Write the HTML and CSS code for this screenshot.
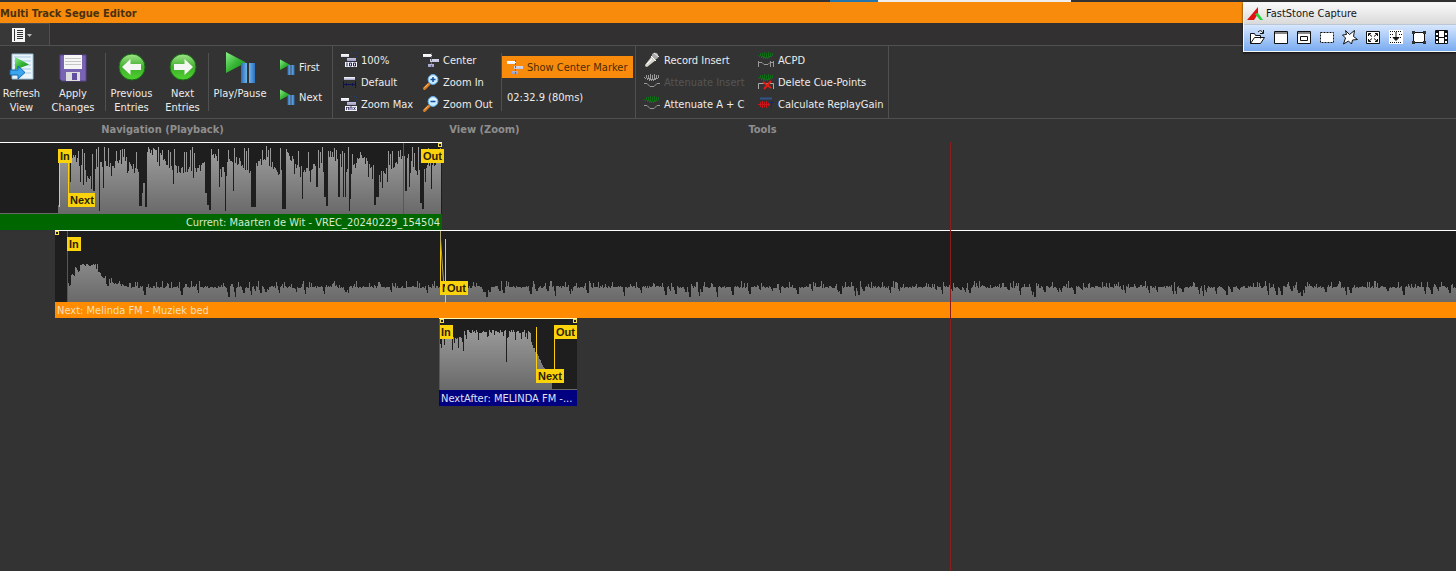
FILE: index.html
```html
<!DOCTYPE html>
<html lang="en">
<head>
<meta charset="utf-8">
<title>Multi Track Segue Editor</title>
<link rel="stylesheet" href="styles.css">
</head>
<body>
<svg class="defs" aria-hidden="true">
  <defs>
    <linearGradient id="wave" x1="0" y1="0" x2="0" y2="71" gradientUnits="userSpaceOnUse"><stop offset="0" stop-color="#a2a2a2"/><stop offset="1" stop-color="#696969"/></linearGradient>
    <linearGradient id="green" x1="0" y1="0" x2="1" y2="1"><stop offset="0" stop-color="#8df08a"/><stop offset=".5" stop-color="#37b535"/><stop offset="1" stop-color="#168a1c"/></linearGradient>
    <linearGradient id="ball" x1="0" y1="0" x2="0" y2="1"><stop offset="0" stop-color="#a3e58b"/><stop offset=".5" stop-color="#3fae2c"/><stop offset="1" stop-color="#4fd22f"/></linearGradient>
    <linearGradient id="blue" x1="0" y1="0" x2="1" y2="0"><stop offset="0" stop-color="#2c6cb8"/><stop offset=".5" stop-color="#78bdf2"/><stop offset="1" stop-color="#2d70bd"/></linearGradient>
    <linearGradient id="bar" x1="0" y1="0" x2="0" y2="1"><stop offset="0" stop-color="#fff"/><stop offset="1" stop-color="#9c9cc8"/></linearGradient>
    <symbol id="playpause" viewBox="0 0 32 32">
      <path d="M2 1L22 11.500L2 22Z" fill="url(#green)"/>
      <path d="M17 12h6v20h-6zM25 12h6v20h-6z" fill="url(#blue)"/>
    </symbol>
    <symbol id="center" viewBox="0 0 16 16">
      <path d="M0 2h9v3H0zM7 7h9v3H7zM5 12h6v3H5z" fill="url(#bar)"/>
      <path d="M8.500 1v14" stroke="#b04a5c" stroke-dasharray="2 1"/>
    </symbol>
    <symbol id="scale" viewBox="0 0 16 16">
      <path d="M0 2h8v3H0zM6 6h9v3H6z" fill="url(#bar)"/>
      <path d="M10 .500h6M.500 11v3M15.500 1v4M2 12.500h2" stroke="#233c78" stroke-dasharray="1 2"/>
      <path d="M4 10h12v5H4z" fill="#f3f3ff"/>
    </symbol>
    <symbol id="lens" viewBox="0 0 16 16">
      <path d="M1.500 14.500L6 10" stroke="#d77a25" stroke-width="3" stroke-linecap="round"/>
      <path d="M1.500 13.700L5 10.200" stroke="#ffc477"/>
      <circle cx="10" cy="5.500" r="4.900" fill="#c9ebff" stroke="#60aff0"/>
      <path d="M7 4q3-3 6 0" stroke="#fff" fill="none"/>
    </symbol>
    <symbol id="noise" viewBox="0 0 16 7"><path d="M.500 3v1M2.500 1v3M4.500 1v4M6.500 0v6M8.500 1v5M10.500 0v6M12.500 1v4M14.500 1v3M1.500 4v1M3.500 4v2M5.500 4v3M7.500 5v2M9.500 5v2M11.500 4v2M13.500 4v1" fill="none" stroke="currentColor"/></symbol>
  </defs>
</svg>

<header class="titlebar"><h1>Multi Track Segue Editor</h1></header>
<div class="tabs">
  <button class="menu" aria-label="Application menu">
    <svg width="20" height="14" viewBox="0 0 20 14"><path d="M0 0h13v14H0z" fill="#f5f5f5"/><path d="M2.500 1v12M5 2.500h6M5 4.500h6M5 6.500h6M5 8.500h6M5 10.500h6" stroke="#333" fill="none"/><path d="M15 6h5l-2.500 3z" fill="#bbb"/></svg>
  </button>
</div>

<nav class="ribbon" aria-label="Ribbon">
  <section class="group navigation">
    <div class="body">
      <button class="big refresh">
        <svg width="32" height="32" viewBox="0 0 32 32"><path d="M6 3h21v25H6z" fill="#eaf4fb" stroke="#9dc2d4"/><path d="M8 6h17M8 10h17M8 14h17M8 18h17M8 22h17" stroke="#a9cbe2"/><path d="M9 6l14 7.500L9 19z" fill="url(#green)"/><path d="M4 19h8v-4l7 6.500-7 6.500v-4H4z" fill="#39a6ee" stroke="#1767b0"/></svg>
        <span>Refresh<br>View</span>
      </button>
      <button class="big apply">
        <svg width="32" height="32" viewBox="0 0 32 32"><path d="M3 4h26v26H5l-2-2z" fill="#7964b4" stroke="#5b458f"/><path d="M7 4h18v14H7z" fill="#f6f6f6"/><path d="M8 7.500h16M8 10.500h16M8 13.500h16" stroke="#c5c5c5"/><path d="M9 21h14v9H9z" fill="#ddd"/><path d="M15 22h5v7h-5z" fill="#644da0"/></svg>
        <span>Apply<br>Changes</span>
      </button>
      <i class="sep"></i>
      <button class="big">
        <svg width="32" height="32" viewBox="0 0 32 32"><circle cx="16" cy="16" r="13" fill="url(#ball)" stroke="#176d16"/><path d="M6 16l8.500-8v5H25v6H14.500v5z" fill="#f4f6f3"/></svg>
        <span>Previous<br>Entries</span>
      </button>
      <button class="big">
        <svg width="32" height="32" viewBox="0 0 32 32"><circle cx="16" cy="16" r="13" fill="url(#ball)" stroke="#176d16"/><path d="M26 16l-8.500-8v5H7v6h10.500v5z" fill="#f4f6f3"/></svg>
        <span>Next<br>Entries</span>
      </button>
      <i class="sep"></i>
      <button class="big play"><svg width="32" height="32"><use href="#playpause"/></svg><span>Play/Pause</span></button>
      <div class="stack loose">
        <button class="small"><svg width="16" height="16"><use href="#playpause"/></svg>First</button>
        <button class="small"><svg width="16" height="16"><use href="#playpause"/></svg>Next</button>
      </div>
    </div>
    <h2>Navigation (Playback)</h2>
  </section>

  <section class="group view">
    <div class="body">
      <div class="stack first">
        <button class="small"><svg width="16" height="16"><use href="#scale"/><path d="M6 10.500v4M8.500 11h2v3h-2zM12.500 11h2v3h-2z" stroke="#225" fill="none"/></svg>100%</button>
        <button class="small"><svg width="16" height="16" viewBox="0 0 16 16"><path d="M3 3h11v3H3z" fill="url(#bar)"/><path d="M2.500 7v7M14.500 7v7M3 10.500h11M5.500 9v3M11.500 9v3" stroke="#0c1450"/></svg>Default</button>
        <button class="small"><svg width="16" height="16"><use href="#scale"/><path d="M5.500 14v-3l1 1 1-1v3M9 14v-3h2v3M12.500 11l2 3M14.500 11l-2 3" stroke="#225" fill="none" stroke-width=".8"/></svg>Zoom Max</button>
      </div>
      <div class="stack second">
        <button class="small"><svg width="16" height="16"><use href="#center"/></svg>Center</button>
        <button class="small"><svg width="16" height="16"><use href="#lens"/><path d="M7.500 5.500h5M10 3v5" stroke="#124ea0" stroke-width="1.500"/></svg>Zoom In</button>
        <button class="small"><svg width="16" height="16"><use href="#lens"/><path d="M7.500 5.500h5" stroke="#124ea0" stroke-width="1.500"/></svg>Zoom Out</button>
      </div>
      <i class="sep"></i>
      <div class="stack loose marker">
        <button class="small active" aria-pressed="true"><svg width="16" height="16"><use href="#center"/></svg>Show Center Marker</button>
        <output class="time">02:32.9 (80ms)</output>
      </div>
    </div>
    <h2>View (Zoom)</h2>
  </section>

  <section class="group tools">
    <div class="body">
      <div class="stack insert">
        <button class="small"><svg width="16" height="16" viewBox="0 0 16 16"><path d="M1 13l7-9 4 4-9 7q-2 0-2-2z" fill="#d8d5cd"/><circle cx="11" cy="4" r="3.200" fill="#aaa"/><path d="M7 4l5 5M3 12l5-5" stroke="#fff"/><path d="M10 1l5 4" stroke="#eee"/></svg>Record Insert</button>
        <button class="small" disabled><svg width="16" height="16" color="#999"><use href="#noise" width="16" height="7"/><path d="M0 9.500h3l3 3h4l3-3h3" fill="none" stroke="#999"/></svg>Attenuate Insert</button>
        <button class="small"><svg width="16" height="16" color="#126b18"><use href="#noise" width="16" height="7"/><path d="M0 9.500h3l3 3h4l3-3h3" fill="none" stroke="#999"/></svg>Attenuate A + C</button>
      </div>
      <div class="stack">
        <button class="small"><svg width="16" height="16" color="#126b18"><use href="#noise" width="16" height="7"/><path d="M.500 15V9M1 10.500h3l2 2h4l2-2h3M12.500 9v6M15.500 9v6" fill="none" stroke="#999"/></svg>ACPD</button>
        <button class="small"><svg width="16" height="16" color="#126b18"><use href="#noise" width="16" height="7"/><path d="M.500 15v-5.500h15V15" fill="none" stroke="#aaa"/><path d="M5 8l8 6M13 7l-7 8" stroke="#e31c13" stroke-width="2"/></svg>Delete Cue-Points</button>
        <button class="small"><svg width="16" height="16" viewBox="0 0 16 16"><path d="M2 2.500h12" stroke="#31558b" stroke-width="2"/><path d="M0 8.500h12M2.500 6v5M4.500 5v7M6.500 6v5M8.500 5v7M10.500 7v3" fill="none" stroke="#c5171b"/><path d="M13.500 5v8M12 6.500h4" stroke="#17208c"/></svg>Calculate ReplayGain</button>
      </div>
    </div>
    <h2>Tools</h2>
  </section>
</nav>

<main class="timeline">
  <article class="clip current">
    <svg class="wave" data-wave="current"></svg>
    <i class="cue" style="left:59px;top:18px;height:46px"></i>
    <i class="cue" style="left:68px;top:18px;height:40px"></i>
    <i class="playhead" style="left:403px"></i>
    <b class="flag" style="left:58px">In</b>
    <b class="flag low" style="left:68px">Next</b>
    <i class="handle" style="left:438px"></i>
    <b class="flag" style="left:421px">Out</b>
    <footer>Current: Maarten de Wit - VREC_20240229_154504</footer>
  </article>
  <article class="clip next">
    <svg class="wave" data-wave="next"></svg>
    <i class="cue" style="left:385px;top:8px;height:50px"></i>
    <i class="cue" style="left:390px;top:8px;height:64px"></i>
    <svg class="fade" width="6" height="64"><path d="M.500 0v8l4 56" stroke="#b0a870" fill="none"/></svg>
    <i class="playhead" style="left:12px"></i>
    <i class="handle" style="left:0"></i>
    <b class="flag" style="left:12px">In</b>
    <b class="flag low covered" style="left:385px">N</b>
    <b class="flag low" style="left:390px">Out</b>
    <footer>Next: Melinda FM - Muziek bed</footer>
  </article>
  <article class="clip after">
    <svg class="wave" data-wave="after"></svg>
    <i class="cue" style="left:97px;top:8px;height:50px"></i>
    <i class="cue" style="left:115px;top:18px;height:40px"></i>
    <i class="handle" style="left:1px"></i>
    <i class="handle" style="left:134px"></i>
    <b class="flag" style="left:0">In</b>
    <b class="flag" style="left:115px">Out</b>
    <b class="flag low" style="left:97px">Next</b>
    <i class="playhead" style="left:0"></i>
    <footer>NextAfter: MELINDA FM -...</footer>
  </article>
  <i class="centerline"></i>
</main>

<aside class="capture" aria-label="FastStone Capture">
  <h2><svg width="16" height="14" viewBox="0 0 16 14"><path d="M0 13L11 0v7L7 13z" fill="#e01212"/><path d="M8 7l3-1 5 7h-3z" fill="#22d43a"/></svg>FastStone Capture</h2>
  <div class="captools">
    <button aria-label="Open"><svg width="17" height="16"><path d="M1.500 14.500v-10h4l1 2h5v3M1.500 14.500l4-6h10l-4 6zM9 3q3-3 5 1M14.500 1v3.500H11"/></svg></button>
    <button aria-label="Active window"><svg width="17" height="16"><path d="M2.500 2.500h13v12h-13zM2 4h14"/></svg></button>
    <button aria-label="Window object"><svg width="17" height="16"><path d="M2.500 2.500h13v12h-13zM2 4h14M5.500 7.500h7v4h-7z"/></svg></button>
    <button aria-label="Rectangle"><svg width="17" height="16"><path d="M2.500 3.500h13v10h-13z" stroke-dasharray="2 1"/></svg></button>
    <button aria-label="Freehand"><svg width="17" height="16"><path d="M4.500 1.500l4 4 5-4-1 6 4 3-5 .500-1 4-3-3-5 3 2-6-3-3 4-.500z"/></svg></button>
    <button aria-label="Full screen"><svg width="17" height="16"><path d="M2.500 2.500h13v12h-13zM5 5l3 2.500M13 5l-3 2.500M5 12l3-2.500M13 12l-3-2.500M4.500 7V4.500H7M11 4.500h2.500V7M4.500 10v2.500H7M11 12.500h2.500V10"/></svg></button>
    <button aria-label="Scrolling window"><svg width="17" height="16"><path d="M2 1h14v14H2z" stroke="none"/><path d="M3 2.500h12M3 5.500h3M12 5.500h3M3 8.500h2M13 8.500h2M3 13.500h12" stroke-dasharray="1 1"/><path d="M9 3v7M6 8.500l3 3 3-3z" fill="#111"/></svg></button>
    <button aria-label="Fixed region"><svg width="17" height="16"><path d="M3.500 3.500h11v10h-11z"/><path d="M2 2h3v3H2zM13 2h3v3h-3zM2 12h3v3H2zM13 12h3v3h-3z" fill="#333" stroke="none"/></svg></button>
    <button aria-label="Video"><svg width="17" height="16"><path d="M2.500 1.500h12v13h-12zM5.500 1v14M11.500 1v14M5.500 8.500h6"/><path d="M4 2v12M13 2v12" stroke-dasharray="2 2" stroke-width="2"/></svg></button>
  </div>
</aside>
<script src="waves.js"></script>
</body>
</html>
```

FILE: styles.css
```css
*, *::after { box-sizing: border-box; }

body {
  margin: 0;
  min-height: 100vh;
  display: flex;
  flex-direction: column;
  position: relative;
  overflow-x: hidden;
  background: #333;
  color: #ececec;
  font: 11px/13px "DejaVu Sans Condensed", "DejaVu Sans", sans-serif;
}

h1, h2 { margin: 0; font-size: 11px; }
svg { flex: none; }
.defs { position: absolute; width: 0; height: 0; }

button {
  padding: 0;
  border: 0;
  background: none;
  color: inherit;
  font: inherit;
  white-space: nowrap;
}

.titlebar {
  height: 23px;
  border-top: 2px solid #333;
  border-image: linear-gradient(90deg, #333 57%, #2477ae 57%, #2477ae 60.300%, #eee 60.300%, #eee 73.500%, #333 73.500%) 2;
  background: #f98b0c;
}
.titlebar h1 { color: #49300f; line-height: 23px; }

.tabs { height: 22px; background: #323031; }
.menu {
  display: flex;
  align-items: center;
  width: 50px;
  height: 22px;
  padding-left: 12px;
  border-top: 1px solid #4c4c4c;
  border-right: 1px solid #505050;
  background: #383838;
}

.ribbon { display: flex; height: 97px; }
.ribbon::after { content: ""; flex: 1; height: 74px; border: solid #505050; border-width: 1px 0; }
.group .body {
  display: flex;
  height: 74px;
  border: solid #505050;
  border-width: 1px 1px 1px 0;
}
.group h2 { padding-top: 3px; line-height: 15px; color: #8e8e8e; text-align: center; }
.navigation { width: 333px; }
.navigation h2 { padding-right: 8px; }
.view { width: 303px; }
.tools { width: 253px; }

.sep { width: 1px; height: 58px; margin-top: 7px; background: #505050; }

.big {
  display: flex;
  flex-direction: column;
  align-items: center;
  gap: 4px;
  width: 51px;
  padding-top: 5px;
  line-height: 14px;
}
.refresh { width: 43px; }
.apply { width: 62px; padding-right: 2px; }
.play { width: 62px; }

.stack { display: flex; flex-direction: column; padding-top: 3px; }
.stack.loose { padding: 10px 0 0 8px; gap: 8px; }
.stack.loose.marker { padding-left: 0; }
.stack.first { width: 90px; padding-left: 8px; }
.stack.second { width: 78px; }
.stack.insert { width: 122px; padding-left: 8px; }

.small { display: flex; align-items: center; gap: 4px; height: 22px; }
.small:disabled { color: #555; }
.active { width: 131px; padding-left: 5px; background: #f98b0c; color: #4b2b00; }
.time { padding-left: 5px; line-height: 23px; }

.timeline { flex: 1; position: relative; overflow: hidden; }
.clip {
  position: relative;
  height: 88px;
  border-top: 1px solid #fff;
  background: #1e1e1e;
}
.current { width: 442px; }
.next { margin-left: 55px; }
.after { width: 138px; margin-left: 439px; border-top-color: #fff8b0; }
.wave { display: block; width: 100%; height: 71px; }
.clip footer { height: 16px; padding: 0 2px; line-height: 18px; white-space: nowrap; }
.current footer { background: #060; text-align: right; color: #d5ead0; }
.next footer { background: #ff8c00; color: #f4dfbc; }
.after footer { background: #000080; color: #e0e0f5; }

.fade { position: absolute; left: 385px; top: 0; }
.cue, .playhead { position: absolute; width: 1px; background: #fbd008; }
.playhead { top: 0; height: 71px; background: #e21b1b; }
.handle { position: absolute; top: 0; width: 4px; height: 4px; border: 1px solid #f5dc50; }
.flag {
  position: absolute;
  top: 6px;
  height: 14px;
  padding: 0 2px;
  background: #fbd30c;
  color: #2b2100;
  font: bold 11px/14px "Liberation Sans", sans-serif;
}
.flag.low { top: 50px; }
.flag.covered { width: 5px; overflow: hidden; }
.current .flag { max-width: 27px; }
.centerline { position: absolute; top: 0; bottom: 0; left: 950px; width: 1px; background: #8c1d1d; }

.capture {
  position: absolute;
  top: 2px;
  right: 0;
  width: 213px;
  border: solid #f5f5f5;
  border-width: 1px 0 1px 1px;
  box-shadow: 0 1px 2px #111;
  color: #151515;
}
.capture h2 {
  display: flex;
  align-items: center;
  gap: 3px;
  height: 21px;
  padding-left: 3px;
  font-weight: normal;
  background: linear-gradient(#fafafa, #d9d9d9);
}
.captools {
  display: flex;
  gap: 6px;
  height: 27px;
  padding-left: 5px;
  padding-top: 4px;
  align-items: flex-start;
  border-top: 1px solid #bcc7d6;
  background: linear-gradient(#d7e7fd, #79abf0);
}
.captools svg { display: block; fill: #fff; stroke: #111; }
```

FILE: waves.js
```js
const BASE = 71;

function noise(seed) {
  let s = seed;
  return () => (s = (s * 16807) % 2147483647) / 2147483647;
}

// Deep dips in the voice track: [first x, last x, top of the column]
const voiceDips = [
  [58, 59, 62], [70, 70, 39], [93, 94, 48], [99, 99, 68], [103, 103, 45], [139, 141, 63],
  [142, 142, 50], [143, 144, 40], [145, 146, 64], [173, 173, 41], [205, 206, 50], [207, 208, 62],
  [209, 210, 67], [219, 219, 44], [225, 225, 68], [233, 233, 48], [251, 255, 64], [282, 285, 66],
  [302, 302, 56], [316, 317, 44], [324, 325, 54], [326, 327, 63], [338, 339, 54], [343, 343, 54],
  [345, 345, 54], [349, 349, 68], [350, 350, 56], [374, 375, 62], [376, 378, 54], [405, 406, 48],
  [409, 409, 44], [420, 421, 60], [422, 423, 66], [431, 431, 46]
];

// Average level of the voice track: [x, top]
const voiceLevels = [
  [58, 12], [74, 14], [82, 26], [90, 34], [100, 20], [112, 22], [125, 16], [138, 30], [147, 8],
  [158, 10], [170, 25], [185, 28], [200, 25], [211, 8], [220, 22], [238, 18], [250, 27], [256, 22],
  [265, 15], [280, 32], [286, 8], [300, 26], [316, 24], [328, 12], [350, 30], [360, 14], [373, 25],
  [380, 30], [395, 22], [403, 14], [419, 30], [424, 24], [441, 20]
];

function levelAt(x) {
  const i = voiceLevels.findIndex(p => p[0] > x);
  if (i < 1) return 20;
  const [x0, y0] = voiceLevels[i - 1];
  const [x1, y1] = voiceLevels[i];
  return y0 + (y1 - y0) * (x - x0) / (x1 - x0);
}

const shapes = {
  current(rand) {
    const tops = Array(58).fill(70);
    let level = 20;
    for (let x = 58; x < 441; x++) {
      const r = rand();
      level = levelAt(x) + rand() * 8 - 4;
      if (x % 2 === 0 && r < 0.35) level = 3 + rand() * 8;
      else if (r > 0.9) level += 12;
      const dip = voiceDips.find(d => x >= d[0] && x <= d[1]);
      tops.push(dip ? dip[2] : Math.max(3, level));
    }
    return tops;
  },
  next(rand) {
    const tops = Array(13).fill(71);
    let dip = 0;
    let depth = 0;
    for (let x = 13; x < 4000; x++) {
      let h = 15;
      if (x < 24) h = 24 + (x - 13) * 1.2;
      else if (x < 38) h = 37;
      else if (x < 50) h = 37 - (x - 38) * 1.3;
      else if (x < 75) h = 21 - (x - 50) * 0.24;
      const r = rand();
      if (dip > 0) {
        dip--;
        h -= depth;
      } else if (r < 0.08) {
        dip = rand() < 0.5 ? 2 : 1;
        depth = 3 + rand() * 7;
        h -= depth / 2;
      } else if (r < 0.24) {
        h += 2 + rand() * 4;
      } else {
        h += rand() * 2 - 1;
      }
      tops.push(BASE - Math.min(38, h));
    }
    return tops;
  },
  after(rand) {
    const tops = [];
    for (let x = 0; x < 138; x++) {
      let top = 11 + (rand() < 0.3 ? rand() * 12 : rand() * 3);
      if (x < 25) top += 6;
      if (x === 13) top = 31;
      if (x === 24) top = 32;
      if (x === 67) top = 43;
      if (x > 91) top = 20 + (x - 91) * 2 + rand() * 3;
      if (x > 112) top = 70;
      tops.push(Math.min(70, top));
    }
    return tops;
  }
};

document.querySelectorAll("[data-wave]").forEach((svg, i) => {
  const tops = shapes[svg.dataset.wave](noise(4711 + i * 97));
  const path = document.createElementNS("http://www.w3.org/2000/svg", "path");
  path.setAttribute("d", "M0 " + BASE + tops.map((t, x) => "V" + Math.round(t) + "H" + (x + 1)).join("") + "V" + BASE + "Z");
  path.setAttribute("fill", "url(#wave)");
  path.setAttribute("shape-rendering", "crispEdges");
  svg.append(path);
});
```
